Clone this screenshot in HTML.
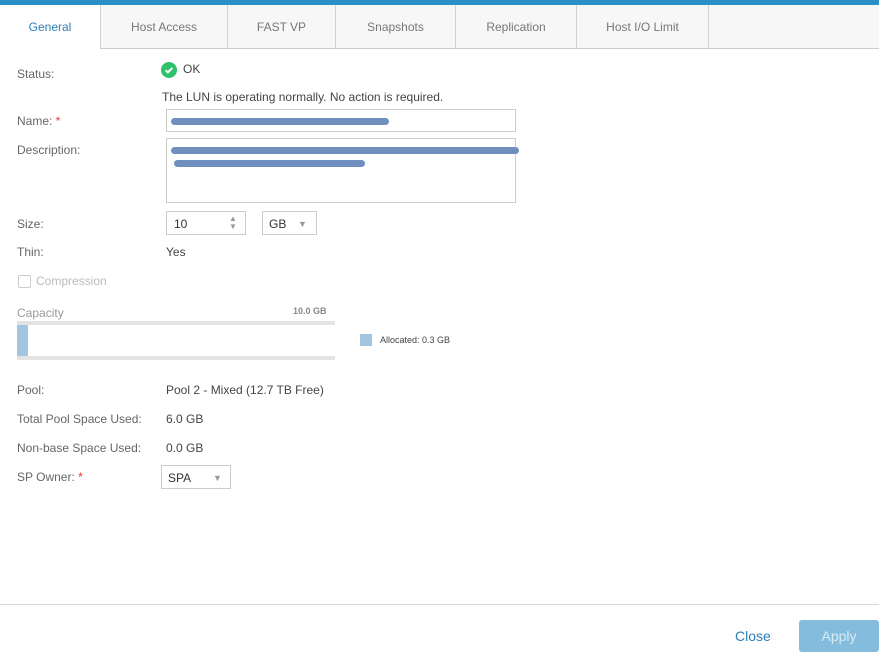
<!DOCTYPE html>
<html><head><style>
*{margin:0;padding:0;box-sizing:border-box}
body{width:879px;height:659px;background:#fff;font-family:"Liberation Sans",sans-serif;font-size:12px;color:#444;position:relative;overflow:hidden}
.a{position:absolute;white-space:nowrap}
.lbl{color:#666}
.tab{position:absolute;top:5px;height:44px;border-right:1px solid #d0d0d0;border-bottom:1px solid #ccc;color:#777;text-align:center;line-height:44px;font-size:12px;background:#f7f7f7}
.box{position:absolute;border:1px solid #ccc;background:#fff}
.red{position:absolute;height:7px;background:#6f8fbf;border-radius:4px}
</style></head><body>
<div class="a" style="left:0;top:0;width:879px;height:5px;background:#2a8fc4"></div>
<div class="a" style="left:0;top:5px;width:879px;height:44px;background:#f7f7f7;border-bottom:1px solid #ccc"></div>
<div class="tab" style="left:0;width:101px;background:#fff;border-bottom:none;color:#2a7fb8">General</div>
<div class="tab" style="left:101px;width:127px">Host Access</div>
<div class="tab" style="left:228px;width:108px">FAST VP</div>
<div class="tab" style="left:336px;width:120px">Snapshots</div>
<div class="tab" style="left:456px;width:121px">Replication</div>
<div class="tab" style="left:577px;width:132px">Host I/O Limit</div>

<div class="a lbl" style="left:17px;top:67px">Status:</div>
<div class="a" style="left:161px;top:62px;width:16px;height:16px;border-radius:50%;background:#2ec26a"><svg width="16" height="16"><path d="M4.5 8.2l2.3 2.3 4.5-4.6" stroke="#fff" stroke-width="2" fill="none"/></svg></div>
<div class="a" style="left:183px;top:62px;color:#444">OK</div>
<div class="a" style="left:162px;top:90px;color:#444">The LUN is operating normally. No action is required.</div>

<div class="a lbl" style="left:17px;top:114px">Name:<span style="color:#e33"> *</span></div>
<div class="box" style="left:166px;top:109px;width:350px;height:23px"></div>
<div class="red" style="left:171px;top:118px;width:218px"></div>

<div class="a lbl" style="left:17px;top:143px">Description:</div>
<div class="box" style="left:166px;top:138px;width:350px;height:65px"></div>
<div class="red" style="left:171px;top:147px;width:348px"></div>
<div class="red" style="left:174px;top:160px;width:191px"></div>

<div class="a lbl" style="left:17px;top:217px">Size:</div>
<div class="box" style="left:166px;top:211px;width:80px;height:24px"></div>
<div class="a" style="left:174px;top:217px;color:#333">10</div>
<div class="a" style="left:229px;top:215px;font-size:8px;color:#999;line-height:8px">▲<br>▼</div>
<div class="box" style="left:262px;top:211px;width:55px;height:24px"></div>
<div class="a" style="left:269px;top:217px;color:#333">GB</div>
<div class="a" style="left:298px;top:219px;font-size:9px;color:#999">▼</div>

<div class="a lbl" style="left:17px;top:245px">Thin:</div>
<div class="a" style="left:166px;top:245px;color:#444">Yes</div>

<div class="a" style="left:18px;top:275px;width:13px;height:13px;border:1px solid #ccc;border-radius:2px"></div>
<div class="a" style="left:36px;top:274px;color:#bbb">Compression</div>

<div class="a" style="left:17px;top:306px;color:#999">Capacity</div>
<div class="a" style="left:293px;top:306px;color:#888;font-size:9px;font-weight:bold">10.0 GB</div>
<div class="a" style="left:17px;top:321px;width:318px;height:4px;background:#e3e3e3"></div>
<div class="a" style="left:17px;top:325px;width:11px;height:31px;background:#a3c5e0"></div>
<div class="a" style="left:17px;top:356px;width:318px;height:4px;background:#e3e3e3"></div>
<div class="a" style="left:360px;top:334px;width:12px;height:12px;background:#a3c5e0"></div>
<div class="a" style="left:380px;top:335px;font-size:9px;color:#444">Allocated: 0.3 GB</div>

<div class="a lbl" style="left:17px;top:383px">Pool:</div>
<div class="a" style="left:166px;top:383px">Pool 2 - Mixed (12.7 TB Free)</div>
<div class="a lbl" style="left:17px;top:412px">Total Pool Space Used:</div>
<div class="a" style="left:166px;top:412px">6.0 GB</div>
<div class="a lbl" style="left:17px;top:441px">Non-base Space Used:</div>
<div class="a" style="left:166px;top:441px">0.0 GB</div>
<div class="a lbl" style="left:17px;top:470px">SP Owner:<span style="color:#e33"> *</span></div>
<div class="box" style="left:161px;top:465px;width:70px;height:24px"></div>
<div class="a" style="left:168px;top:471px;color:#333">SPA</div>
<div class="a" style="left:213px;top:473px;font-size:9px;color:#999">▼</div>

<div class="a" style="left:0;top:604px;width:879px;height:1px;background:#d6d6d6"></div>
<div class="a" style="left:735px;top:628px;font-size:14px;color:#2a7fb8">Close</div>
<div class="a" style="left:799px;top:620px;width:80px;height:32px;background:#83bcdc;border-radius:3px;color:#d7ebf5;font-size:14px;text-align:center;line-height:32px">Apply</div>
</body></html>
